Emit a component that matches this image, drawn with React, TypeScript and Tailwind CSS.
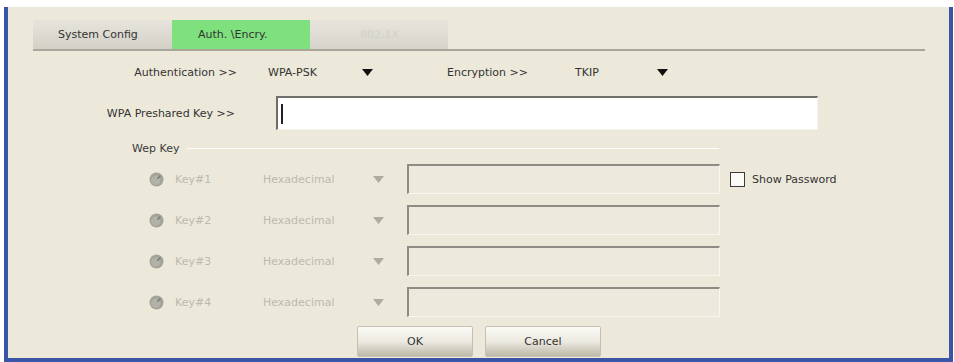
import React from "react";

function Caret({ muted = false }: { muted?: boolean }) {
  return (
    <svg width="11" height="7" viewBox="0 0 11 7" className="block">
      <polygon points="0,0 11,0 5.5,7" fill={muted ? "#aeaca0" : "#111111"} />
    </svg>
  );
}

function Radio() {
  return (
    <svg width="15" height="15" viewBox="0 0 15 15" className="block">
      <circle cx="7.5" cy="7.5" r="7" fill="#a4a399" />
      <circle cx="6.8" cy="8.2" r="4.6" fill="#b3b2a8" />
      <path d="M8.8 6.2 L11 4" stroke="#7c7b73" strokeWidth="1.5" strokeLinecap="round" />
    </svg>
  );
}

function WepRow({ n, first }: { n: number; first?: boolean }) {
  return (
    <div className="flex h-[30px] items-center">
      <div className="ml-[141px] w-[26px]">
        <Radio />
      </div>
      <span className="w-[88px] text-[#bcbaae]">Key#{n}</span>
      <span className="w-[110px] text-[#bcbaae]">Hexadecimal</span>
      <div className="w-[34px]">
        <Caret muted />
      </div>
      <div className="h-[30px] w-[313px] border-t-2 border-l-2 border-b border-r border-t-[#8d8c84] border-l-[#8d8c84] border-b-[#f7f6f0] border-r-[#f7f6f0] bg-[#eceadd]" />
      {first ? (
        <div className="ml-[10px] flex items-center">
          <span className="h-[15px] w-[15px] border border-[#3a3a3a] bg-[#fafaf7]" />
          <span className="ml-[7px] text-[#333]">Show Password</span>
        </div>
      ) : null}
    </div>
  );
}

export default function App() {
  return (
    <div
      className="h-[362px] w-[954px] bg-white pt-[7px] pl-[4px] text-[11px] leading-none text-[#333]"
      style={{ fontFamily: '"DejaVu Sans", Verdana, sans-serif' }}
    >
      <div className="h-[355px] w-[949px] border-x-4 border-b-4 border-x-[#3a55a6] border-b-[#3a55a6] bg-[#ece9da] pt-[13px]">
        {/* tabs */}
        <div className="ml-[25px] flex h-[31px] w-[892px] border-b-2 border-b-[#a9a79c]">
          <div className="flex w-[139px] items-center bg-gradient-to-b from-[#e6e4dc] to-[#d3d1c6] pl-[25px]">
            System Config
          </div>
          <div className="flex w-[138px] items-center bg-[#7fe07e] pl-[26px]">
            Auth. \Encry.
          </div>
          <div className="flex w-[138px] items-center bg-gradient-to-b from-[#e6e4dc] to-[#d6d4ca] pl-[50px] text-[#d3d1c6]">
            802.1X
          </div>
        </div>

        {/* authentication row */}
        <div className="mt-[13px] flex h-[16px] items-center">
          <span className="w-[229px] text-right">Authentication &gt;&gt;</span>
          <span className="ml-[31px] w-[94px]">WPA-PSK</span>
          <div className="w-[85px]">
            <Caret />
          </div>
          <span className="w-[128px]">Encryption &gt;&gt;</span>
          <span className="w-[82px]">TKIP</span>
          <Caret />
        </div>

        {/* preshared key */}
        <div className="mt-[16px] flex h-[34px] items-center">
          <span className="w-[227px] text-right">WPA Preshared Key &gt;&gt;</span>
          <div className="ml-[41px] flex h-[34px] w-[542px] items-center border-t-2 border-l-2 border-b border-r border-t-[#6f6e68] border-l-[#6f6e68] border-b-[#f4f3ec] border-r-[#f4f3ec] bg-white pl-[3px]">
            <span className="h-[20px] w-[2px] bg-[#222]" />
          </div>
        </div>

        {/* wep key group */}
        <div className="mt-[11px] flex h-[14px] items-center">
          <span className="ml-[124px] text-[#3a3a3a]">Wep Key</span>
          <div className="ml-[8px] h-px w-[532px] border-b border-b-[#fdfdfb] bg-[#b9b7ac]" />
        </div>

        <div className="mt-[9px] flex flex-col gap-[11px]">
          <WepRow n={1} first />
          <WepRow n={2} />
          <WepRow n={3} />
          <WepRow n={4} />
        </div>

        {/* buttons */}
        <div className="mt-[9px] flex gap-[12px] pl-[349px]">
          <button className="h-[31px] w-[116px] rounded-[2px] border border-[#c4c2b6] bg-gradient-to-b from-[#fbfaf6] via-[#ebe9e0] to-[#bdbaa9] text-[11px] text-[#333]">
            OK
          </button>
          <button className="h-[31px] w-[116px] rounded-[2px] border border-[#c4c2b6] bg-gradient-to-b from-[#fbfaf6] via-[#ebe9e0] to-[#bdbaa9] text-[11px] text-[#333]">
            Cancel
          </button>
        </div>
      </div>
    </div>
  );
}
